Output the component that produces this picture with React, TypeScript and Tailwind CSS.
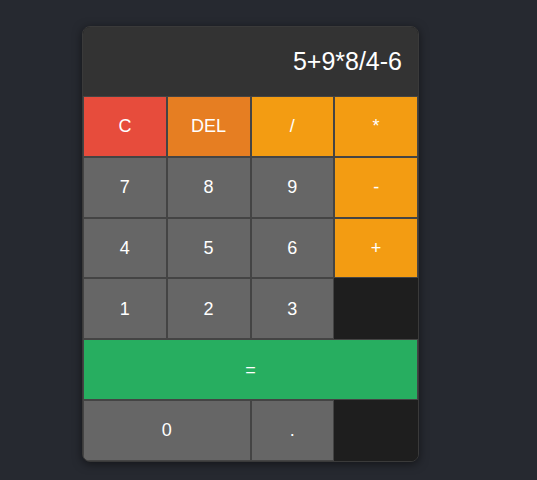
type Key = {
  label: string;
  tone: "clear" | "del" | "op" | "num" | "eq" | "empty";
  span?: string;
};

const keys: Key[] = [
  { label: "C", tone: "clear" },
  { label: "DEL", tone: "del" },
  { label: "/", tone: "op" },
  { label: "*", tone: "op" },
  { label: "7", tone: "num" },
  { label: "8", tone: "num" },
  { label: "9", tone: "num" },
  { label: "-", tone: "op" },
  { label: "4", tone: "num" },
  { label: "5", tone: "num" },
  { label: "6", tone: "num" },
  { label: "+", tone: "op" },
  { label: "1", tone: "num" },
  { label: "2", tone: "num" },
  { label: "3", tone: "num" },
  { label: "", tone: "empty" },
  { label: "=", tone: "eq", span: "col-span-4" },
  { label: "0", tone: "num", span: "col-span-2" },
  { label: ".", tone: "num" },
  { label: "", tone: "empty" },
];

const toneClass: Record<Key["tone"], string> = {
  clear: "bg-[#e74c3c]",
  del: "bg-[#e67e22]",
  op: "bg-[#f39c12]",
  num: "bg-[#666666]",
  eq: "bg-[#27ae60]",
  empty: "bg-[#1e1e1e]",
};

export default function App() {
  return (
    <div className="min-h-[480px] bg-[#262930] pl-[82px] pt-[26px] font-['Liberation_Sans',Arial,sans-serif]">
      <div className="w-[337px] overflow-hidden rounded-lg border border-[#3a3a3a] bg-[#1e1e1e] shadow-[0_2px_10px_rgba(0,0,0,0.5)]">
        <div className="flex h-[69px] items-center justify-end bg-[#333333] px-4 text-[25px] text-white">
          5+9*8/4-6
        </div>
        <div className="grid grid-cols-4 auto-rows-[60.8px]">
          {keys.map((k, i) =>
            k.tone === "empty" ? (
              <div key={i} className={toneClass.empty} />
            ) : (
              <button
                key={i}
                className={`${k.span ?? ""} ${toneClass[k.tone]} flex items-center justify-center border border-[#444444] text-lg text-white`}
              >
                {k.label}
              </button>
            )
          )}
        </div>
      </div>
    </div>
  );
}
